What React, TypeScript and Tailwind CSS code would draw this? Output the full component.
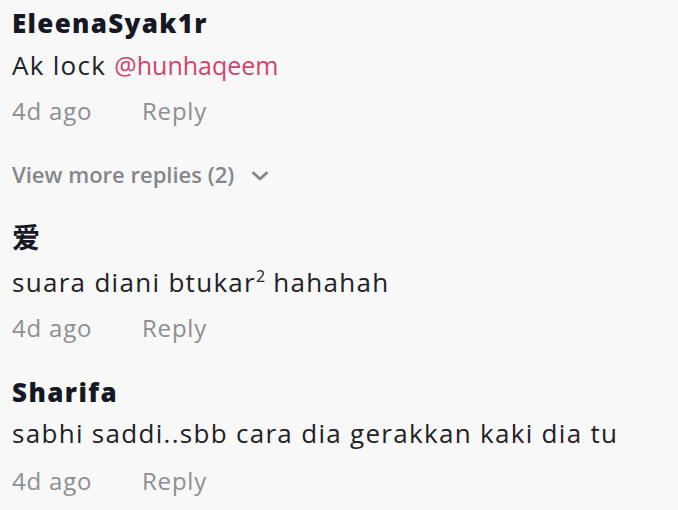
import React from "react";

function Meta({ mt }: { mt: string }) {
  return (
    <div className={`flex items-center h-[30px] text-[24px] leading-[30px] tracking-[0.8px] text-[#8e8e93] ${mt}`}>
      <span className="w-[130px]">4d ago</span>
      <span>Reply</span>
    </div>
  );
}

export default function App() {
  return (
    <div
      className="w-[678px] h-[510px] bg-[#f8f8f8] pl-[12px] pt-[8px] overflow-hidden"
      style={{ fontFamily: "'Open Sans', 'Noto Sans CJK SC', sans-serif" }}
    >
      <div className="h-[30px] text-[26px] leading-[30px] font-extrabold tracking-[1.3px] text-[#161823]">EleenaSyak1r</div>
      <div className="h-[30px] text-[26px] leading-[30px] tracking-[1.3px] text-[#222226] mt-[12px]">
        Ak lock <span className="text-[25px] tracking-normal text-[#d2456b]">@hunhaqeem</span>
      </div>
      <Meta mt="mt-[16px]" />
      <div className="flex items-center h-[30px] gap-[17px] mt-[33px] text-[22px] leading-[30px] font-semibold text-[#85868b]">
        <span>View more replies (2)</span>
        <svg width="18" height="12" viewBox="0 0 18 12" fill="none" className="mt-[3px]">
          <path d="M2.5 3l6.5 6 6.5-6" stroke="#85868b" strokeWidth="2.8" strokeLinecap="round" strokeLinejoin="round" />
        </svg>
      </div>
      <div className="h-[30px] text-[28px] leading-[30px] font-bold text-[#161823] mt-[33px]">爱</div>
      <div className="h-[30px] text-[26px] leading-[30px] tracking-[1.3px] text-[#222226] mt-[15px]">
        suara diani btukar<span className="relative top-[-10px] text-[16px] leading-none tracking-normal">2</span> hahahah
      </div>
      <Meta mt="mt-[16px]" />
      <div className="h-[30px] text-[26px] leading-[30px] font-extrabold tracking-[1.4px] text-[#161823] mt-[34px]">Sharifa</div>
      <div className="h-[30px] text-[26px] leading-[30px] tracking-[1.3px] text-[#222226] mt-[11px]">
        sabhi saddi..sbb cara dia gerakkan kaki dia tu
      </div>
      <Meta mt="mt-[18px]" />
    </div>
  );
}
